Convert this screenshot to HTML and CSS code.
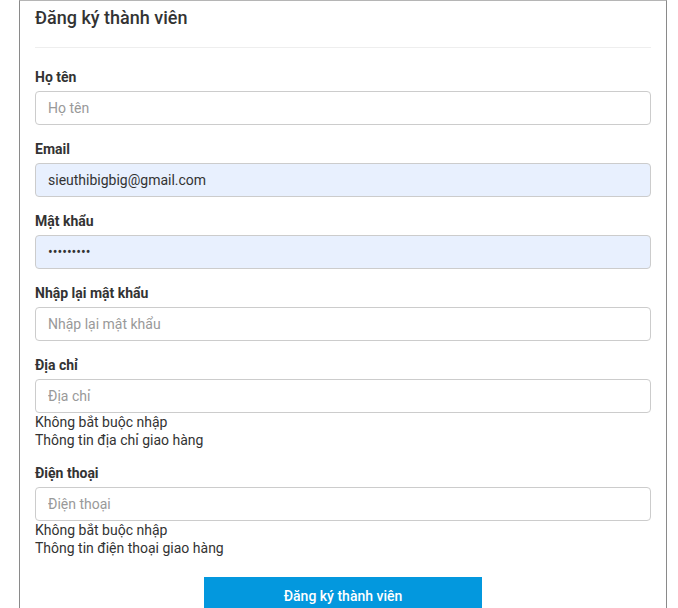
FILE: index.html
```html
<!DOCTYPE html>
<html lang="vi">
<head>
    <meta charset="UTF-8">
    <meta name="viewport" content="width=device-width, initial-scale=1.0">
    <title>Đăng ký thành viên</title>
    <link rel="stylesheet" href="styles.css">
</head>
<body>
    <div class="container">
        <h3 class="title">Đăng ký thành viên</h3>
        <form class="register-form">
            <div class="form-group">
                <label for="hoTen">Họ tên</label>
                <input type="text" id="hoTen" placeholder="Họ tên">
            </div>
            <div class="form-group">
                <label for="email">Email</label>
                <input type="email" id="email" class="autofill" value="sieuthibigbig@gmail.com" placeholder="Email">
            </div>
            <div class="form-group">
                <label for="matKhau">Mật khẩu</label>
                <input type="password" id="matKhau" class="autofill" value="123456789" placeholder="Mật khẩu">
            </div>
            <div class="form-group">
                <label for="nhapLai">Nhập lại mật khẩu</label>
                <input type="password" id="nhapLai" placeholder="Nhập lại mật khẩu">
            </div>
            <div class="form-group">
                <label for="diaChi">Địa chỉ</label>
                <input type="text" id="diaChi" placeholder="Địa chỉ">
                <div class="help">Không bắt buộc nhập<br>Thông tin địa chỉ giao hàng</div>
            </div>
            <div class="form-group">
                <label for="dienThoai">Điện thoại</label>
                <input type="text" id="dienThoai" placeholder="Điện thoại">
                <div class="help">Không bắt buộc nhập<br>Thông tin điện thoại giao hàng</div>
            </div>
            <div class="actions">
                <button type="submit">Đăng ký thành viên</button>
            </div>
        </form>
    </div>
</body>
</html>
```

FILE: styles.css
```css
body {
    font-family: Roboto, "Liberation Sans", Arial, sans-serif;
    margin: 0;
    padding: 0;
    background: #fff;
    color: #333;
}
.container {
    width: 616px;
    margin-left: 19px;
    padding: 5px 15px 0;
    border: 1px solid #8a8a8a;
    border-bottom: none;
    border-top-color: #b5b5b5;
    min-height: 603px;
}
.title {
    margin: 0 0 20px;
    font-size: 18px;
    font-weight: 500;
    line-height: 24px;
    padding-bottom: 17px;
    border-bottom: 1px solid #eee;
}
.form-group {
    margin-bottom: 15px;
}
label {
    display: block;
    font-size: 14px;
    font-weight: 700;
    line-height: 18px;
    margin-bottom: 5px;
}
input {
    display: block;
    box-sizing: border-box;
    width: 100%;
    height: 34px;
    padding: 6px 12px;
    font-family: inherit;
    font-size: 14px;
    color: #333;
    border: 1px solid #ccc;
    border-radius: 4px;
    background: #fff;
    outline: none;
}
input::placeholder {
    color: #999;
}
input.autofill {
    background: #e8f0fe;
}
.help {
    font-size: 14px;
    line-height: 18px;
}
.actions {
    text-align: center;
    padding-top: 5px;
}
button {
    width: 278px;
    padding: 10px;
    font-family: inherit;
    font-size: 14px;
    font-weight: 500;
    line-height: 18px;
    color: #fff;
    background: #0398de;
    border: none;
    cursor: pointer;
}
```
